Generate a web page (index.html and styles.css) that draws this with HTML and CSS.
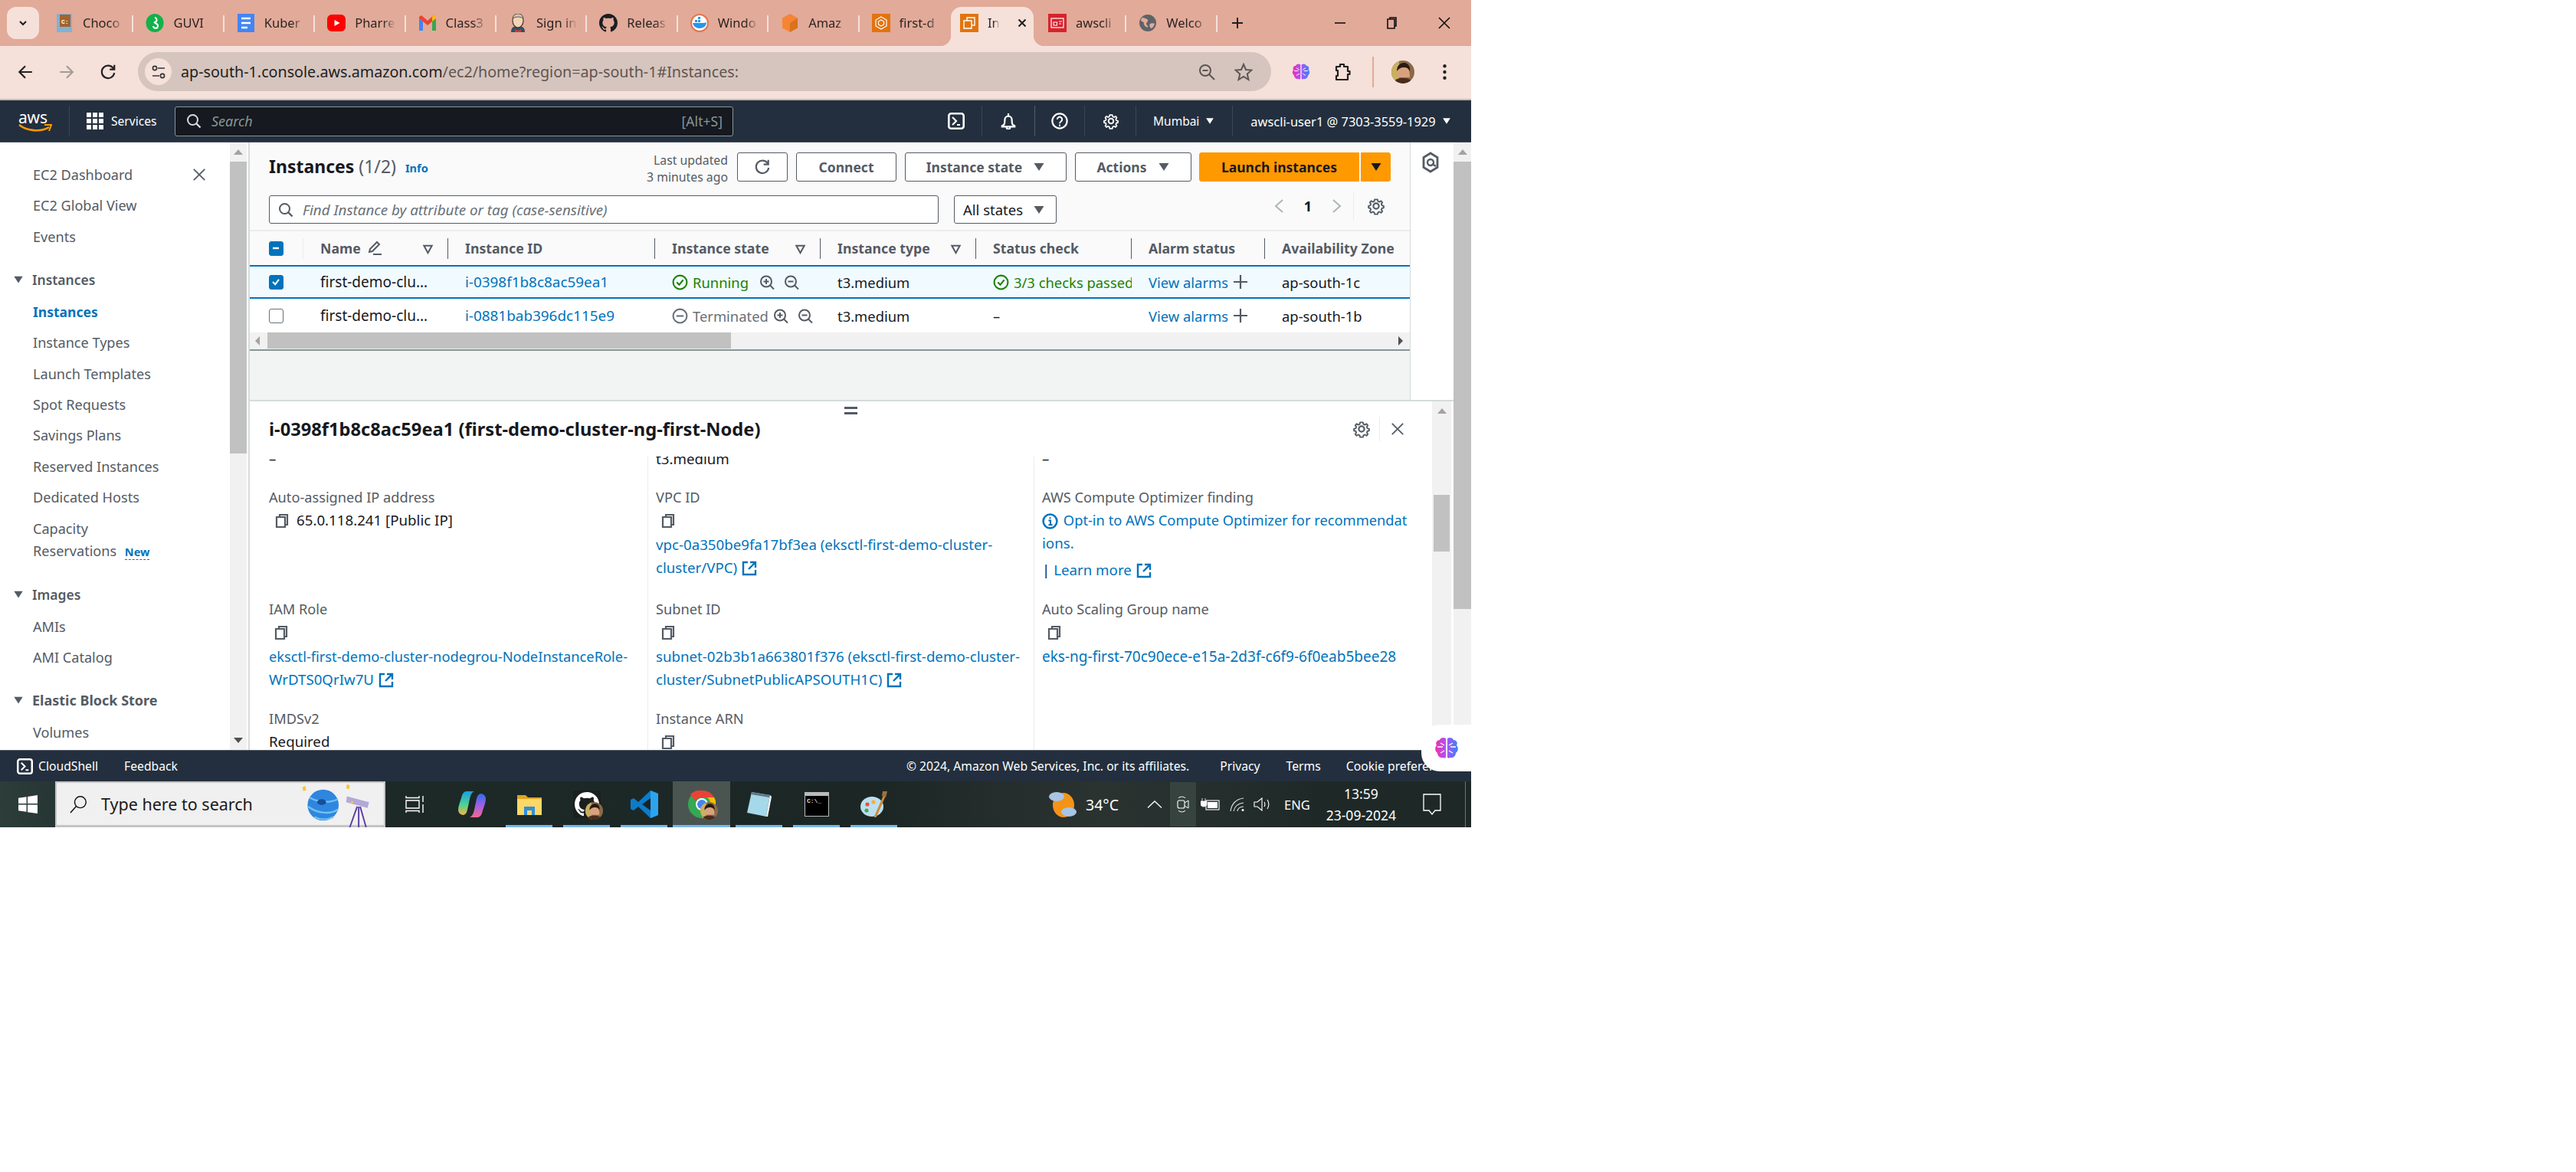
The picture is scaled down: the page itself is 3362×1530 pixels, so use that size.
FILE: index.html
```html
<!DOCTYPE html>
<html lang="en">
<head>
<meta charset="utf-8">
<title>Instances | EC2</title>
<link rel="stylesheet" href="styles.css">
</head>
<body>
<svg class="defs" width="0" height="0">
  <symbol id="i-copy" viewBox="0 0 20 20"><path d="M7 5V2h10v13h-3M3 5h11v13H3z" fill="none" stroke="currentColor" stroke-width="2.2"/></symbol>
  <symbol id="i-ext" viewBox="0 0 20 20"><path d="M8 2H2v16h16v-6M11 2h7v7M18 2L9 11" fill="none" stroke="currentColor" stroke-width="2.4"/></symbol>
  <symbol id="i-zin" viewBox="0 0 20 20"><circle cx="9" cy="9" r="7" fill="none" stroke="currentColor" stroke-width="2"/><path d="M14 14l5 5M5.5 9h7M9 5.5v7" fill="none" stroke="currentColor" stroke-width="2"/></symbol>
  <symbol id="i-zout" viewBox="0 0 20 20"><circle cx="9" cy="9" r="7" fill="none" stroke="currentColor" stroke-width="2"/><path d="M14 14l5 5M5.5 9h7" fill="none" stroke="currentColor" stroke-width="2"/></symbol>
  <symbol id="i-plus" viewBox="0 0 20 20"><path d="M10 1v18M1 10h18" stroke="currentColor" stroke-width="2.2" fill="none"/></symbol>
  <symbol id="i-gear" viewBox="0 0 24 24"><path d="M12 2l2.2 0 .7 2.8 2.1.9 2.5-1.500 2 2.300-1.500 2.400.8 2.100 2.700.8v2.800l-2.700.8-.8 2.100 1.500 2.400-2 2.300-2.500-1.500-2.100.9-.7 2.800h-4.400l-.7-2.800-2.100-.9-2.500 1.500-2-2.300 1.500-2.400-.8-2.100-2.700-.8v-2.800l2.700-.8.8-2.100-1.500-2.400 2-2.300 2.500 1.500 2.100-.9.7-2.800z" transform="translate(12 12) scale(.86) translate(-12 -12)" fill="none" stroke="currentColor" stroke-width="2.200" stroke-linejoin="round"/><circle cx="12" cy="12" r="3.600" fill="none" stroke="currentColor" stroke-width="2.200"/></symbol>
  <symbol id="i-shell" viewBox="0 0 22 22"><rect x="1.300" y="1.300" width="19.400" height="19.400" rx="3" fill="none" stroke="currentColor" stroke-width="2.600"/><path d="M6 6l5 5-5 5M12 16h4" fill="none" stroke="currentColor" stroke-width="2.200"/></symbol>
  <symbol id="i-search" viewBox="0 0 20 20"><circle cx="8.500" cy="8.500" r="6.500" fill="none" stroke="currentColor" stroke-width="2"/><path d="M13 13l5.500 5.500" stroke="currentColor" stroke-width="2.400"/></symbol>
  <symbol id="i-close" viewBox="0 0 20 20"><path d="M2 2l16 16M18 2L2 18" stroke="currentColor" stroke-width="2" fill="none"/></symbol>
  <symbol id="i-brain" viewBox="0 0 32 32"><defs><linearGradient id="g-brain" x1="0" x2="1"><stop offset="0" stop-color="#f22fb0"/><stop offset=".5" stop-color="#a855f7"/><stop offset="1" stop-color="#3b82f6"/></linearGradient></defs><path d="M15 3c-3-2-7-1-8 2-4 0-6 4-4 7-3 3-2 8 1 10 0 4 4 7 7 6 2 1 4 1 4-1zM17 3c3-2 7-1 8 2 4 0 6 4 4 7 3 3 2 8-1 10 0 4-4 7-7 6-2 1-4 1-4-1z" fill="url(#g-brain)"/><path d="M4 14h7M8 9l5 3M8 22l5-3M28 14h-7M24 9l-5 3M24 22l-5-3" stroke="#fff" stroke-width="1.300" fill="none"/></symbol>
  <symbol id="i-face" viewBox="0 0 30 30"><clipPath id="c-face"><circle cx="15" cy="15" r="15"/></clipPath><g clip-path="url(#c-face)"><rect width="30" height="30" fill="#8a6a45"/><rect x="0" y="0" width="10" height="30" fill="#c9b060"/><path d="M8 22c0-9 2-15 8-15s8 6 8 15z" fill="#d9a27e"/><path d="M7 14C7 5 13 3 17 3s8 4 7 11c-2-4-4-5-8-5s-7 2-9 5z" fill="#2a1a12"/><path d="M2 32c0-7 6-9 13-9s13 2 13 9z" fill="#4a2c1c"/></g></symbol>
  <symbol id="i-sort" viewBox="0 0 16 16"><path d="M2.500 3h11L8 13z" fill="none" stroke="currentColor" stroke-width="2.200"/></symbol>
  <symbol id="i-caret" viewBox="0 0 16 16"><path d="M1.500 3h13L8 13z" fill="currentColor"/></symbol>
</svg>

<div class="screen">
  <header class="tabbar">
    <div class="tab-search"><svg width="14" height="14" viewBox="0 0 14 14"><path d="M3 5l4 4 4-4" fill="none" stroke="#1c1b1f" stroke-width="2"/></svg></div>
    <div class="tab"><svg class="fav" viewBox="0 0 24 24"><rect x="2" width="20" height="24" fill="#7fb2d8"/><rect x="6" y="1" width="14" height="16" fill="#a5632c"/><text x="8" y="13" class="fav-text">C:</text></svg><span class="tab-label">Choco</span></div>
    <div class="tab"><svg class="fav" viewBox="0 0 24 24"><ellipse cx="12" cy="12" rx="11.500" ry="12" fill="#12b14b"/><path d="M12 5a3 3 0 1 1-1 6l3 2a3 3 0 1 1-4 3" fill="none" stroke="#fff" stroke-width="2"/></svg><span class="tab-label">GUVI</span></div>
    <div class="tab"><svg class="fav" viewBox="0 0 24 24"><rect x="1" width="22" height="28" rx="2" y="-2" fill="#4285f4"/><path d="M6 6h12M6 12h12M6 18h8" stroke="#fff" stroke-width="2.600"/></svg><span class="tab-label">Kuber</span></div>
    <div class="tab"><svg class="fav" viewBox="0 0 24 24"><rect y="1" width="24" height="22" rx="6" fill="#f00"/><path d="M9.500 8l7 4-7 4z" fill="#fff"/></svg><span class="tab-label">Pharre</span></div>
    <div class="tab"><svg class="fav" viewBox="0 0 24 24"><path d="M1 22V6l5 4v12z" fill="#4285f4"/><path d="M23 22V6l-5 4v12z" fill="#34a853"/><path d="M1 6l11 9 11-9v-2l-3-2-8 7-8-7-3 2z" fill="#ea4335"/><path d="M18 10l5-4V3l-3-1-2 2z" fill="#fbbc04"/></svg><span class="tab-label">Class3</span></div>
    <div class="tab"><svg class="fav" viewBox="0 0 24 24"><path d="M3 24c0-6 3-8 9-8s9 2 9 8z" fill="#335061"/><ellipse cx="12" cy="9" rx="7" ry="9" fill="#f0d6b7" stroke="#49332a" stroke-width="1.200"/><path d="M5 6c1-5 4-6 7-6s6 1 7 6c-3-2-9-3-14 0z" fill="#d1c4b4" stroke="#49332a" stroke-width=".8"/><path d="M8 20l4 2 4-2v4H8z" fill="#d33833"/></svg><span class="tab-label">Sign in</span></div>
    <div class="tab"><svg class="fav" viewBox="0 0 16 16"><path fill="#1b1f23" d="M8 0C3.580 0 0 3.580 0 8c0 3.540 2.290 6.530 5.470 7.590.4.070.55-.17.55-.38 0-.19-.01-.82-.01-1.490-2.010.37-2.530-.49-2.690-.94-.09-.23-.48-.94-.82-1.130-.28-.15-.68-.52-.01-.53.63-.01 1.080.58 1.230.82.72 1.210 1.870.87 2.330.66.070-.52.28-.87.51-1.070-1.780-.2-3.640-.89-3.640-3.950 0-.87.31-1.590.82-2.150-.08-.2-.36-1.020.08-2.120 0 0 .67-.21 2.200.82.64-.18 1.320-.27 2-.27.68 0 1.360.09 2 .27 1.530-1.040 2.200-.82 2.200-.82.44 1.100.16 1.920.08 2.120.51.56.82 1.270.82 2.150 0 3.070-1.870 3.750-3.650 3.950.29.25.54.73.54 1.480 0 1.070-.01 1.930-.01 2.200 0 .21.15.46.55.38A8.013 8.013 0 0016 8c0-4.420-3.580-8-8-8z"/></svg><span class="tab-label">Releas</span></div>
    <div class="tab"><svg class="fav" viewBox="0 0 24 24"><circle cx="12" cy="12" r="11" fill="#fff" stroke="#e8734a" stroke-width="2"/><path d="M3 12h15c1 0 3-1 3-1 0 5-4 8-9 8s-8-3-9-7z" fill="#2496ed"/><path d="M6 8h3v3H6zM10 8h3v3h-3zM10 4h3v3h-3z" fill="#2496ed"/></svg><span class="tab-label">Windo</span></div>
    <div class="tab"><svg class="fav" viewBox="0 0 24 24"><path d="M12 0l10 5.500v13L12 24 2 18.500v-13z" fill="#f58534"/><path d="M12 12l10-6.500v13L12 24z" fill="#d9731c"/></svg><span class="tab-label">Amaz</span></div>
    <div class="tab no-sep"><svg class="fav" viewBox="0 0 24 24"><rect width="24" height="24" fill="#e2740f"/><path d="M12 4l7 4v8l-7 4-7-4V8z M12 8l3.500 2v4L12 16l-3.500-2v-4z" fill="none" stroke="#fff" stroke-width="1.200"/></svg><span class="tab-label">first-d</span></div>
    <div class="tab-active"><svg class="fav" viewBox="0 0 24 24"><rect width="24" height="24" fill="#e2740f"/><path d="M9 9V5h10v10h-4M5 9h10v10H5z" fill="none" stroke="#fff" stroke-width="1.400"/></svg><span class="tab-label short">In</span><svg class="tab-x" viewBox="0 0 12 12"><path d="M1.500 1.500l9 9M10.500 1.500l-9 9" stroke="#1f1f1f" stroke-width="2"/></svg></div>
    <div class="tab"><svg class="fav" viewBox="0 0 24 24"><rect width="24" height="24" fill="#d6242d"/><rect x="4" y="6" width="16" height="12" fill="none" stroke="#fff" stroke-width="1.200"/><rect x="7" y="11" width="4.500" height="4" fill="none" stroke="#fff"/><path d="M14 10h4M14 13h3" stroke="#fff"/></svg><span class="tab-label">awscli</span></div>
    <div class="tab"><svg class="fav" viewBox="0 0 24 24"><circle cx="12" cy="12" r="11" fill="#5f6368"/><path d="M5 5c3 1 6 1 7 3s-2 3-2 5 3 2 2 5c-3-1-5-3-5-5 0-3-3-3-4-4 0-2 1-3 2-4zM15 13c2-1 4-1 6 0-1 3-3 6-5 6-2-2-2-5-1-6z" fill="#e2aa99"/></svg><span class="tab-label">Welco</span></div>
    <svg class="tab-plus" viewBox="0 0 16 16"><path d="M8 1v14M1 8h14" stroke="#1f1f1f" stroke-width="2"/></svg>
    <div class="win-controls">
      <svg viewBox="0 0 16 16"><path d="M1 8h14" stroke="#111" stroke-width="1.600"/></svg>
      <svg viewBox="0 0 16 16"><path d="M5 3V1h8v11h-2M2 3h9v12H2z" fill="none" stroke="#111" stroke-width="1.600"/></svg>
      <svg viewBox="0 0 16 16"><path d="M1 1l14 14M15 1L1 15" stroke="#111" stroke-width="1.600"/></svg>
    </div>
  </header>

  <div class="toolbar">
    <svg class="tb-icon" viewBox="0 0 20 20"><path d="M18 10H3M10 3l-7 7 7 7" fill="none" stroke="#222" stroke-width="2"/></svg>
    <svg class="tb-icon" viewBox="0 0 20 20"><path d="M2 10h15M10 3l7 7-7 7" fill="none" stroke="#a39a96" stroke-width="2"/></svg>
    <svg class="tb-icon" viewBox="0 0 20 20"><path d="M16.500 6A7.500 7.500 0 1 0 17.500 11" fill="none" stroke="#222" stroke-width="2"/><path d="M17.500 1.500V7H12" fill="none" stroke="#222" stroke-width="2"/></svg>
    <div class="omnibox">
      <div class="site-info"><svg width="20" height="20" viewBox="0 0 20 20"><circle cx="5" cy="5" r="2.600" fill="none" stroke="#333" stroke-width="1.600"/><path d="M9 5h9M2 15h9" stroke="#333" stroke-width="1.600"/><circle cx="15" cy="15" r="2.600" fill="none" stroke="#333" stroke-width="1.600"/></svg></div>
      <div class="url"><span class="url-host">ap-south-1.console.aws.amazon.com</span>/ec2/home?region=ap-south-1#Instances:</div>
      <svg class="omni-zoom" viewBox="0 0 22 22"><circle cx="9" cy="9" r="7" fill="none" stroke="#5b5755" stroke-width="2"/><path d="M5.500 9h7M14 14l7 7" stroke="#5b5755" stroke-width="2"/></svg>
      <svg class="omni-star" viewBox="0 0 24 24"><path d="M12 2l3 7 7.500.6-5.700 5 1.700 7.400L12 18l-6.500 4 1.700-7.400-5.700-5L9 9z" fill="none" stroke="#5b5755" stroke-width="2"/></svg>
    </div>
    <svg class="ext-brain"><use href="#i-brain"/></svg>
    <svg class="ext-puzzle" viewBox="0 0 24 24"><path d="M4 5h5V2h5v3h5v6h2.500v4H19v7H4v-5h2v-7H4z" fill="none" stroke="#1f1f1f" stroke-width="2.200" stroke-linejoin="round"/></svg>
    <span class="tb-sep"></span>
    <svg class="tb-avatar"><use href="#i-face"/></svg>
    <svg class="tb-menu" viewBox="0 0 4 20"><circle cx="2" cy="3" r="2" fill="#222"/><circle cx="2" cy="10" r="2" fill="#222"/><circle cx="2" cy="17" r="2" fill="#222"/></svg>
  </div>

  <nav class="awsnav">
    <div class="aws-logo"><span class="aws-word">aws</span><svg class="aws-smile" viewBox="0 0 44 12"><path d="M1 2c10 8 28 10 39 3" fill="none" stroke="#f90" stroke-width="2.600"/><path d="M34 2l9 0-3 8" fill="none" stroke="#f90" stroke-width="2"/></svg></div>
    <span class="nav-sep logo-sep"></span>
    <svg class="grid-icon" viewBox="0 0 22 22"><g fill="#fff"><rect width="6" height="6"/><rect x="8" width="6" height="6"/><rect x="16" width="6" height="6"/><rect y="8" width="6" height="6"/><rect x="8" y="8" width="6" height="6"/><rect x="16" y="8" width="6" height="6"/><rect y="16" width="6" height="6"/><rect x="8" y="16" width="6" height="6"/><rect x="16" y="16" width="6" height="6"/></g></svg>
    <span class="nav-services">Services</span>
    <div class="nav-search">
      <svg class="nav-search-icon"><use href="#i-search"/></svg>
      <span class="nav-search-ph">Search</span>
      <span class="nav-search-key">[Alt+S]</span>
    </div>
    <svg class="nav-icon shell"><use href="#i-shell"/></svg>
    <span class="nav-sep"></span>
    <svg class="nav-icon bell" viewBox="0 0 24 24"><path d="M12 1v3M6 17c1-2 1-4 1-7a5 5 0 0 1 10 0c0 3 0 5 1 7l3 2v1H3v-1zM9.500 21a2.500 2.500 0 0 0 5 0" fill="none" stroke="#fff" stroke-width="2.400"/></svg>
    <span class="nav-sep strong"></span>
    <svg class="nav-icon help" viewBox="0 0 24 24"><circle cx="12" cy="12" r="10.500" fill="none" stroke="#fff" stroke-width="2.400"/><path d="M8.500 9.500a3.500 3.500 0 1 1 5.500 3c-1.300.9-2 1.500-2 3M12 17v2.500" fill="none" stroke="#fff" stroke-width="2.200"/></svg>
    <span class="nav-sep"></span>
    <svg class="nav-icon gear"><use href="#i-gear"/></svg>
    <span class="nav-sep"></span>
    <span class="nav-region">Mumbai</span><svg class="nav-caret"><use href="#i-caret"/></svg>
    <span class="nav-sep"></span>
    <span class="nav-user">awscli-user1 @ 7303-3559-1929</span><svg class="nav-caret"><use href="#i-caret"/></svg>
  </nav>

  <div class="console">
    <aside class="sidenav">
      <div class="side-head"><span class="side-link">EC2 Dashboard</span><svg class="side-close"><use href="#i-close"/></svg></div>
      <div class="side-link item">EC2 Global View</div>
      <div class="side-link item">Events</div>
      <div class="side-section"><svg class="side-caret"><use href="#i-caret"/></svg>Instances</div>
      <div class="side-link item active">Instances</div>
      <div class="side-link item">Instance Types</div>
      <div class="side-link item">Launch Templates</div>
      <div class="side-link item">Spot Requests</div>
      <div class="side-link item">Savings Plans</div>
      <div class="side-link item">Reserved Instances</div>
      <div class="side-link item">Dedicated Hosts</div>
      <div class="side-link item wrap">Capacity<br>Reservations <span class="side-new">New</span></div>
      <div class="side-section"><svg class="side-caret"><use href="#i-caret"/></svg>Images</div>
      <div class="side-link item">AMIs</div>
      <div class="side-link item">AMI Catalog</div>
      <div class="side-section bold"><svg class="side-caret"><use href="#i-caret"/></svg>Elastic Block Store</div>
      <div class="side-link item">Volumes</div>
    </aside>
    <div class="scrollbar side-scroll"><span class="sb-arrow up"></span><span class="sb-thumb"></span><span class="sb-arrow down"></span></div>

    <main class="workspace">
      <div class="upper">
        <section class="instances">
          <div class="inst-head">
            <h1 class="inst-title">Instances <span class="inst-count">(1/2)</span></h1>
            <span class="info">Info</span>
            <div class="last-updated">Last updated<br>3 minutes ago</div>
            <button class="btn icon-btn"><svg viewBox="0 0 20 20" width="22" height="22"><path d="M16.500 6A7.500 7.500 0 1 0 17.500 11" fill="none" stroke="#545b64" stroke-width="2"/><path d="M17 1.500V7H11.500" fill="none" stroke="#545b64" stroke-width="2"/></svg></button>
            <button class="btn connect">Connect</button>
            <button class="btn state">Instance state<svg class="btn-caret"><use href="#i-caret"/></svg></button>
            <button class="btn actions">Actions<svg class="btn-caret"><use href="#i-caret"/></svg></button>
            <button class="btn primary launch">Launch instances</button>
            <button class="btn primary launch-more"><svg class="btn-caret"><use href="#i-caret"/></svg></button>
          </div>
          <div class="inst-filter">
            <div class="filter-input"><svg class="filter-icon"><use href="#i-search"/></svg><span>Find Instance by attribute or tag (case-sensitive)</span></div>
            <div class="filter-select">All states<svg class="btn-caret"><use href="#i-caret"/></svg></div>
            <div class="pager">
              <svg class="pg-arrow" viewBox="0 0 14 20"><path d="M12 2L3 10l9 8" fill="none" stroke="#aab7b8" stroke-width="2"/></svg>
              <span class="pg-num">1</span>
              <svg class="pg-arrow" viewBox="0 0 14 20"><path d="M2 2l9 8-9 8" fill="none" stroke="#aab7b8" stroke-width="2"/></svg>
              <span class="pg-sep"></span>
              <svg class="pg-gear"><use href="#i-gear"/></svg>
            </div>
          </div>
          <div class="table">
            <div class="row thead">
              <div class="cell c-check"><span class="check on"><svg viewBox="0 0 20 20"><path d="M5 10h10" stroke="#fff" stroke-width="3"/></svg></span></div>
              <div class="cell c-name">Name<svg class="pencil" viewBox="0 0 20 20"><path d="M3 15l1-4L13 2l3 3-9 9zM8 18h11" fill="none" stroke="#545b64" stroke-width="2"/></svg><svg class="sort"><use href="#i-sort"/></svg></div>
              <div class="cell c-id">Instance ID</div>
              <div class="cell c-state">Instance state<svg class="sort"><use href="#i-sort"/></svg></div>
              <div class="cell c-type">Instance type<svg class="sort"><use href="#i-sort"/></svg></div>
              <div class="cell c-check2">Status check</div>
              <div class="cell c-alarm">Alarm status</div>
              <div class="cell c-az">Availability Zone</div>
            </div>
            <div class="row selected">
              <div class="cell c-check"><span class="check on"><svg viewBox="0 0 20 20"><path d="M5 10l4 4 6-8" fill="none" stroke="#fff" stroke-width="2.600"/></svg></span></div>
              <div class="cell c-name name-val">first-demo-clu…</div>
              <div class="cell c-id"><span class="link id-val">i-0398f1b8c8ac59ea1</span></div>
              <div class="cell c-state"><svg class="status-ic ok" viewBox="0 0 20 20"><circle cx="10" cy="10" r="8.500" fill="none" stroke="currentColor" stroke-width="2"/><path d="M6 10l3 3 5-6" fill="none" stroke="currentColor" stroke-width="2"/></svg><span class="ok">Running</span><svg class="zoom-ic first"><use href="#i-zin"/></svg><svg class="zoom-ic"><use href="#i-zout"/></svg></div>
              <div class="cell c-type">t3.medium</div>
              <div class="cell c-check2 clip"><svg class="status-ic ok" viewBox="0 0 20 20"><circle cx="10" cy="10" r="8.500" fill="none" stroke="currentColor" stroke-width="2"/><path d="M6 10l3 3 5-6" fill="none" stroke="currentColor" stroke-width="2"/></svg><span class="ok">3/3 checks passed</span></div>
              <div class="cell c-alarm"><span class="link">View alarms</span><svg class="plus-ic"><use href="#i-plus"/></svg></div>
              <div class="cell c-az">ap-south-1c</div>
            </div>
            <div class="row">
              <div class="cell c-check"><span class="check"></span></div>
              <div class="cell c-name name-val">first-demo-clu…</div>
              <div class="cell c-id"><span class="link id-val">i-0881bab396dc115e9</span></div>
              <div class="cell c-state"><svg class="status-ic muted" viewBox="0 0 20 20"><circle cx="10" cy="10" r="8.500" fill="none" stroke="currentColor" stroke-width="2"/><path d="M5.500 10h9" stroke="currentColor" stroke-width="2"/></svg><span class="muted">Terminated</span><svg class="zoom-ic near"><use href="#i-zin"/></svg><svg class="zoom-ic"><use href="#i-zout"/></svg></div>
              <div class="cell c-type">t3.medium</div>
              <div class="cell c-check2">–</div>
              <div class="cell c-alarm"><span class="link">View alarms</span><svg class="plus-ic"><use href="#i-plus"/></svg></div>
              <div class="cell c-az">ap-south-1b</div>
            </div>
          </div>
          <div class="hscroll"><span class="hs-left"></span><span class="hs-thumb"></span><span class="hs-right"></span></div>
          <div class="gap-fill"></div>
        </section>
        <div class="help-rail"><svg width="24" height="28" viewBox="0 0 24 28"><path d="M12 2l9 5.500v13L12 26l-9-5.500v-13z" fill="none" stroke="#545b64" stroke-width="2.800"/><circle cx="12" cy="14" r="4" fill="none" stroke="#545b64" stroke-width="2.400"/><path d="M14 16l5 3" stroke="#545b64" stroke-width="2.400"/></svg></div>
      </div>

      <section class="details">
        <div class="details-main">
          <div class="drag-handle"></div>
          <div class="details-head">
            <h2 class="details-title">i-0398f1b8c8ac59ea1 (first-demo-cluster-ng-first-Node)</h2>
            <svg class="dh-gear"><use href="#i-gear"/></svg>
            <span class="dh-sep"></span>
            <svg class="dh-close"><use href="#i-close"/></svg>
          </div>
          <div class="details-clip">
            <div class="grid">
              <div class="col">
                <div class="kv kv-top"><div class="val">–</div></div>
                <div class="kv kv-a"><div class="key">Auto-assigned IP address</div><div class="val"><svg class="copy inline"><use href="#i-copy"/></svg>65.0.118.241 [Public IP]</div></div>
                <div class="kv kv-b"><div class="key">IAM Role</div><div class="val"><svg class="copy"><use href="#i-copy"/></svg></div><div class="val link"><span class="narrow">eksctl-first-demo-cluster-nodegrou-NodeInstanceRole-</span><br>WrDTS0QrIw7U<svg class="ext"><use href="#i-ext"/></svg></div></div>
                <div class="kv"><div class="key">IMDSv2</div><div class="val">Required</div></div>
              </div>
              <div class="col">
                <div class="kv kv-top"><div class="val">t3.medium</div></div>
                <div class="kv kv-a"><div class="key">VPC ID</div><div class="val"><svg class="copy"><use href="#i-copy"/></svg></div><div class="val link">vpc-0a350be9fa17bf3ea (eksctl-first-demo-cluster-<br>cluster/VPC)<svg class="ext"><use href="#i-ext"/></svg></div></div>
                <div class="kv kv-b"><div class="key">Subnet ID</div><div class="val"><svg class="copy"><use href="#i-copy"/></svg></div><div class="val link">subnet-02b3b1a663801f376 (eksctl-first-demo-cluster-<br>cluster/SubnetPublicAPSOUTH1C)<svg class="ext"><use href="#i-ext"/></svg></div></div>
                <div class="kv"><div class="key">Instance ARN</div><div class="val"><svg class="copy"><use href="#i-copy"/></svg></div></div>
              </div>
              <div class="col">
                <div class="kv kv-top"><div class="val">–</div></div>
                <div class="kv kv-a"><div class="key">AWS Compute Optimizer finding</div><div class="val opt link"><svg class="info-ic" viewBox="0 0 20 20"><circle cx="10" cy="10" r="8.500" fill="none" stroke="currentColor" stroke-width="2.400"/><path d="M10 5v2M8 9h2.500v5M8 14.500h5" fill="none" stroke="currentColor" stroke-width="2"/></svg> <span class="narrow">Opt-in to AWS Compute Optimizer for recommendat</span><br>ions.</div><div class="val learn"><span class="pipe">|</span> <span class="link">Learn more<svg class="ext"><use href="#i-ext"/></svg></span></div></div>
                <div class="kv kv-b"><div class="key">Auto Scaling Group name</div><div class="val"><svg class="copy"><use href="#i-copy"/></svg></div><div class="val link eks-val">eks-ng-first-70c90ece-e15a-2d3f-c6f9-6f0eab5bee28</div></div>
              </div>
            </div>
          </div>
        </div>
        <div class="scrollbar inner-scroll"><span class="sb-arrow up"></span><span class="sb-thumb"></span></div>
      </section>
      <div class="brain-bubble"><svg width="32" height="32"><use href="#i-brain"/></svg></div>
    </main>
    <div class="scrollbar page-scroll"><span class="sb-arrow up"></span><span class="sb-thumb"></span></div>
  </div>

  <footer class="awsfoot">
    <svg class="foot-shell"><use href="#i-shell"/></svg>
    <span class="foot-link shell-label">CloudShell</span>
    <span class="foot-link feedback">Feedback</span>
    <span class="foot-link copyright">© 2024, Amazon Web Services, Inc. or its affiliates.</span>
    <span class="foot-link privacy">Privacy</span>
    <span class="foot-link terms">Terms</span>
    <span class="foot-link cookie">Cookie preferences</span>
  </footer>

  <div class="taskbar">
    <div class="start"><svg width="25" height="24" viewBox="0 0 26 26" preserveAspectRatio="none"><path d="M0 4l11-1.500V12H0zM12.500 2.300L26 0v12H12.500zM0 13.500h11v10L0 22zM12.500 13.500H26V26l-13.500-2z" fill="#fff"/></svg></div>
    <div class="win-search">
      <svg class="ws-glass" viewBox="0 0 26 26"><circle cx="15" cy="10" r="8" fill="none" stroke="#111" stroke-width="1.600"/><path d="M9 16L1 25" stroke="#111" stroke-width="1.600"/></svg>
      <span class="ws-text">Type here to search</span>
      <svg class="ws-art" viewBox="0 0 100 60"><circle cx="28" cy="30" r="21" fill="#2e86de"/><path d="M10 20c10 6 26 8 38 2M8 32c10 8 28 12 40 4M16 46c8 4 18 4 26 0" stroke="#6ec1f5" stroke-width="2.500" fill="none"/><ellipse cx="26" cy="26" rx="6" ry="4" fill="#154f99"/><path d="M60 18l30 8-2 8-29-8z" fill="#b3a9d8"/><path d="M74 32l-10 28M76 32v28M78 32l8 28" stroke="#5b3fa0" stroke-width="2" fill="none"/><path d="M0 6l4-2 1 6-4 1zM60 2l4 1-1 6-4-2zM66 24l3 1-2 4-2-2z" fill="#f5c542"/></svg>
    </div>
    <div class="tk-slot"><svg class="ic-24" viewBox="0 0 24 24"><path d="M1 1v2.500h17V1M1 7h17v10H1zM1 23v-2.500h17V23M23 1v8M23 12v11" fill="none" stroke="#fff" stroke-width="1.400"/></svg></div>
    <div class="tk-slot"><svg class="ic-copilot" viewBox="0 0 36 34"><defs><linearGradient id="g-cop1" x1="0" y1="0" x2="0" y2="1"><stop offset="0" stop-color="#1b9de2"/><stop offset=".55" stop-color="#4ad295"/><stop offset="1" stop-color="#f4b63f"/></linearGradient><linearGradient id="g-cop2" x1="0" y1="0" x2="0" y2="1"><stop offset="0" stop-color="#2a6fe8"/><stop offset=".5" stop-color="#a45ee5"/><stop offset="1" stop-color="#ef6a8f"/></linearGradient></defs><path d="M11 0h10c-4 2-5 6-6 10l-3 14c-1 4-2 6-5 7-4 0-7-3-7-7 0-4 2-9 4-15 1-5 3-9 7-9z" fill="url(#g-cop1)"/><path d="M25 34H15c4-2 5-6 6-10l3-14c1-4 2-6 5-7 4 0 7 3 7 7 0 4-2 9-4 15-1 5-3 9-7 9z" fill="url(#g-cop2)"/></svg></div>
    <div class="tk-slot run"><svg class="ic-folder" viewBox="0 0 32 28"><path d="M0 2h11l3 3h18v23H0z" fill="#e0a420"/><path d="M0 7h32v21H0z" fill="#fcd867"/><path d="M9 28V17h14v11h-4v-6h-6v6z" fill="#2d8fdc"/></svg></div>
    <div class="tk-slot run">
      <svg class="ic-36" viewBox="0 0 36 36"><rect width="36" height="36" fill="#1b1f1e"/><g transform="translate(2 2) scale(2)"><path fill="#fff" d="M8 0C3.580 0 0 3.580 0 8c0 3.540 2.290 6.530 5.470 7.590.4.070.55-.17.55-.38 0-.19-.01-.82-.01-1.490-2.010.37-2.530-.49-2.690-.94-.09-.23-.48-.94-.82-1.130-.28-.15-.68-.52-.01-.53.63-.01 1.080.58 1.230.82.72 1.210 1.870.87 2.330.66.070-.52.28-.87.51-1.070-1.780-.2-3.640-.89-3.640-3.950 0-.87.31-1.590.82-2.150-.08-.2-.36-1.020.08-2.120 0 0 .67-.21 2.200.82.64-.18 1.320-.27 2-.27.68 0 1.360.09 2 .27 1.530-1.040 2.200-.82 2.200-.82.44 1.100.16 1.920.08 2.120.51.56.82 1.270.82 2.150 0 3.070-1.870 3.750-3.650 3.950.29.25.54.73.54 1.480 0 1.070-.01 1.930-.01 2.200 0 .21.15.46.55.38A8.013 8.013 0 0016 8c0-4.420-3.580-8-8-8z"/></g></svg>
      <svg class="tk-badge"><use href="#i-face"/></svg>
    </div>
    <div class="tk-slot run"><svg class="ic-36" viewBox="0 0 36 36"><path d="M26 0l10 4v28l-10 4L10 21l-6 5-4-2V12l4-2 6 5z" fill="#0b7ccb"/><path d="M26 10L15 18l11 8z" fill="#1b2422"/><path d="M26 0l10 4v28l-10 4z" fill="#2ba4f0"/></svg></div>
    <div class="tk-slot active">
      <svg class="ic-36" viewBox="0 0 36 36"><circle cx="18" cy="18" r="18" fill="#34a853"/><path d="M18 0a18 18 0 0 1 16 9H18a9 9 0 0 0-8 5L3 5A18 18 0 0 1 18 0z" fill="#ea4335"/><path d="M34 9a18 18 0 0 1-16 27l8-13a9 9 0 0 0-1-14z" fill="#fbbc04"/><circle cx="18" cy="18" r="7" fill="#4285f4" stroke="#fff" stroke-width="2"/></svg>
      <svg class="tk-badge"><use href="#i-face"/></svg>
    </div>
    <div class="tk-slot run"><svg class="ic-notepad" viewBox="0 0 32 32"><path d="M6 0l24 4-5 28L0 27z" fill="#a5d8e8"/><path d="M6 0l24 4-1 3L5 3z" fill="#5c7a8a"/><path d="M25 32l5-28 2 2-5 26z" fill="#fff"/></svg></div>
    <div class="tk-slot run"><svg class="ic-cmd" viewBox="0 0 32 32"><rect width="32" height="32" fill="#bbb"/><rect x="1" y="5" width="30" height="26" fill="#000"/><text x="3" y="14" class="cmd-text">C:\_</text></svg></div>
    <div class="tk-slot run"><svg class="ic-paint" viewBox="0 0 35 34"><ellipse cx="15" cy="20" rx="15" ry="13" fill="#bcdff0"/><circle cx="9" cy="17" r="2.600" fill="#e94f3d"/><circle cx="17" cy="14" r="2.600" fill="#f2b134"/><circle cx="8" cy="25" r="2.600" fill="#3faa5b"/><path d="M33 2L19 34" stroke="#c98a3a" stroke-width="3"/><path d="M29 0h6l-2 8-5-2z" fill="#a0703a"/></svg></div>
    <div class="weather"><svg class="wx" viewBox="0 0 36 34"><ellipse cx="19" cy="18" rx="14" ry="16" fill="#f39419"/><ellipse cx="10" cy="7" rx="10" ry="6" fill="#a9c4e4"/><ellipse cx="26" cy="27" rx="10" ry="6" fill="#a9c4e4"/></svg><span class="wx-temp">34°C</span></div>
    <svg class="tray chevron" viewBox="0 0 20 10"><path d="M1 9.500L10 1l9 8.500" fill="none" stroke="#fff" stroke-width="1.300"/></svg>
    <div class="tray-meet"><svg width="16" height="22" viewBox="0 0 16 22"><rect x="1" y="6" width="9" height="10" rx="2" fill="none" stroke="#fff" stroke-width="1.100"/><path d="M10 9l5-3v10l-5-3M2 3c2-2.500 7-2.500 9 0M2 19c2 2.500 7 2.500 9 0" fill="none" stroke="#fff" stroke-width="1"/></svg></div>
    <svg class="tray power" viewBox="0 0 25 16"><rect x="7" y="3" width="17" height="12" fill="none" stroke="#fff" stroke-width="1.100"/><rect x="9" y="5" width="13" height="8" fill="#fff"/><path d="M2 0v4M6 0v4M0 4h8v4c0 2-2 3-4 3s-4-1-4-3z" fill="#fff" stroke="#fff" stroke-width=".8"/></svg>
    <svg class="tray wifi" viewBox="0 0 20 18"><path d="M1 18C2 9 8 2 18 1M5 18c1-5 5-10 13-11M10 18c0-3 3-6 8-6" fill="none" stroke="#dfe3e3" stroke-width="1.100"/><circle cx="17" cy="16.500" r="1.500" fill="#fff"/></svg>
    <svg class="tray vol" viewBox="0 0 23 18"><path d="M1 6h4l6-5v16l-6-5H1zM14 6c1.200 2 1.200 4 0 6M18 3c2.500 4 2.500 8 0 12" fill="none" stroke="#fff" stroke-width="1.100"/></svg>
    <span class="tray-lang">ENG</span>
    <div class="clock"><span>13:59</span><span>23-09-2024</span></div>
    <svg class="notify" viewBox="0 0 24 28"><path d="M1 1h22v21h-7l-4 5-4-5H1z" fill="none" stroke="#fff" stroke-width="1.300"/></svg>
    <span class="show-desktop"></span>
  </div>
</div>
</body>
</html>
```
FILE: styles.css
```css
* { box-sizing: border-box; }
html, body { margin: 0; padding: 0; background: #fff; }
body { font-family: "Noto Sans", "Open Sans", sans-serif; color: #16191f; }
.defs { position: absolute; }
.screen { width: 1920px; height: 1080px; display: flex; flex-direction: column; overflow: hidden; }

/* browser tabs */
.tabbar { height: 60px; background: #e2aa99; display: flex; align-items: flex-start; flex: none; }
.tab-search { width: 42px; height: 42px; margin: 9px 5px 0 9px; border-radius: 12px; background: #f5e1da; display: flex; align-items: center; justify-content: center; }
.tab { width: 118.400px; height: 60px; padding: 18px 8px 0 16px; display: flex; gap: 12px; position: relative; flex: none; }
.tab::after { content: ""; position: absolute; right: 0; top: 20px; width: 2px; height: 22px; background: #f5e1da; }
.tab.no-sep::after { display: none; }
.fav { width: 24px; height: 24px; flex: none; }
.fav-text { font: 700 8px "Liberation Mono", monospace; fill: #fff; }
.tab-label { font-size: 16.500px; line-height: 24px; color: #2a2422; white-space: nowrap; flex: 1; min-width: 0; -webkit-mask-image: linear-gradient(90deg, #000 62%, transparent 92%); mask-image: linear-gradient(90deg, #000 62%, transparent 92%); }
.tab-active { width: 108px; height: 51px; margin: 9px 3px 0 1px; padding: 9px 8px 0 12px; background: #f5e1da; border-radius: 14px 14px 0 0; display: flex; gap: 12px; flex: none; position: relative; }
.tab-active::before, .tab-active::after { content: ""; position: absolute; bottom: 0; width: 14px; height: 14px; background: radial-gradient(circle at 0 0, transparent 14px, #f5e1da 14.500px); }
.tab-active::before { left: -14px; }
.tab-active::after { right: -14px; background: radial-gradient(circle at 100% 0, transparent 14px, #f5e1da 14.500px); }
.tab-label.short { flex: 0 0 16px; -webkit-mask-image: linear-gradient(90deg, #000 45%, transparent); mask-image: linear-gradient(90deg, #000 45%, transparent); }
.tab-x { width: 12px; height: 12px; margin: 6px 0 0 11px; flex: none; }
.tab-plus { width: 16px; height: 16px; margin: 22px 0 0 18px; flex: none; }
.win-controls { margin-left: auto; display: flex; gap: 52px; padding: 22px 27px 0 0; }
.win-controls svg { width: 16px; height: 16px; }

/* toolbar */
.toolbar { height: 71px; background: #f5e1da; border-bottom: 2px solid #c9bab4; display: flex; align-items: center; padding: 0 0 2px 22px; flex: none; }
.tb-icon { width: 22px; height: 22px; margin-right: 32px; flex: none; }
.omnibox { width: 1479px; height: 51px; margin-left: -4px; border-radius: 26px; background: #d6c5be; display: flex; align-items: center; padding-left: 9px; flex: none; }
.site-info { width: 35px; height: 35px; border-radius: 50%; background: #f5e1da; display: flex; align-items: center; justify-content: center; flex: none; }
.url { font-size: 19.700px; margin-left: 12px; color: #5f5552; white-space: nowrap; }
.url-host { color: #1f1f1f; }
.omni-zoom { width: 22px; height: 22px; margin-left: auto; }
.omni-star { width: 24px; height: 24px; margin: 0 24px 0 25px; }
.ext-brain { width: 24px; height: 24px; margin-left: 27px; flex: none; }
.ext-puzzle { width: 24px; height: 26px; margin-left: 30px; flex: none; }
.tb-sep { width: 2px; height: 40px; background: #e2aa99; margin-left: 27px; flex: none; }
.tb-avatar { width: 30px; height: 30px; margin-left: 23px; flex: none; }
.tb-menu { width: 5px; height: 22px; margin-left: 37px; flex: none; }

/* aws nav */
.awsnav { height: 55px; background: #232f3e; display: flex; align-items: center; color: #fff; padding-left: 24px; flex: none; border-bottom: 1px solid #4b5563; }
.aws-logo { width: 44px; height: 30px; position: relative; flex: none; }
.aws-word { display: block; font: 400 21px/20px "Noto Sans", sans-serif; letter-spacing: -.2px; }
.aws-smile { position: absolute; left: 0; top: 18px; width: 44px; height: 12px; }
.nav-sep { width: 1px; height: 40px; background: #3a4656; flex: none; }
.nav-sep.strong { background: #545b64; }
.logo-sep { margin: 0 22px; }
.grid-icon { width: 22px; height: 22px; flex: none; }
.nav-services { font-size: 15.600px; width: 62px; margin-left: 10px; flex: none; white-space: nowrap; }
.nav-search { width: 729px; height: 39px; margin: 0 0 0 21px; background: #16191f; border: 1px solid #879596; border-radius: 3px; display: flex; align-items: center; padding: 0 13px 0 14px; flex: none; }
.nav-search-icon { width: 20px; height: 20px; color: #d5dbdb; flex: none; }
.nav-search-ph { font-size: 18px; font-style: italic; color: #879596; margin-left: 13px; }
.nav-search-key { font-size: 17.600px; color: #879596; margin-left: auto; }
.nav-icon { flex: none; color: #fff; }
.nav-icon.shell { width: 22px; height: 22px; margin: 0 22px 0 280px; }
.nav-icon.bell { width: 22px; height: 22px; margin: 0 23px; }
.nav-icon.help { width: 22px; height: 22px; margin: 0 21px; }
.nav-icon.gear { width: 22px; height: 22px; margin: 0 21px 0 23px; }
.nav-region { font-size: 15.500px; margin-left: 22px; flex: none; }
.nav-user { font-size: 16.400px; margin-left: 23px; flex: none; }
.nav-caret { width: 12px; height: 12px; margin: 0 23px 0 8px; flex: none; color: #fff; }

/* console layout */
.console { flex: 1; min-height: 0; display: flex; background: #fff; }
.sidenav { width: 300px; flex: none; padding: 28px 0 0 43px; overflow: hidden; font-size: 18.100px; color: #545b64; }
.side-head { display: flex; align-items: center; height: 28px; justify-content: space-between; padding-right: 31px; margin-bottom: 12.400px; }
.side-close { width: 18px; height: 18px; color: #545b64; }
.item { height: 28px; line-height: 28px; margin-bottom: 12.400px; white-space: nowrap; }
.item.active { color: #0073bb; font-weight: 700; font-size: 17.500px; }
.item.wrap { height: 58px; line-height: 29px; margin-bottom: 26px; white-space: normal; }
.side-new { color: #0073bb; font-size: 14.500px; font-weight: 700; border-bottom: 1px dashed #0073bb; margin-left: 6px; }
.side-section { height: 28px; line-height: 28px; margin: 28px 0 14px -26px; color: #545b64; font-weight: 600; font-size: 17.500px; display: flex; align-items: center; gap: 11px; white-space: nowrap; }
.side-section.bold { font-weight: 700; font-size: 18px; }
.side-caret { width: 14px; height: 14px; color: #545b64; flex: none; }

.scrollbar { background: #f1f1f1; display: flex; flex-direction: column; align-items: center; flex: none; position: relative; }
.side-scroll { width: 22px; margin-right: 2px; }
.sb-thumb { display: block; width: 100%; background: #c1c1c1; }
.sb-arrow { display: block; width: 0; height: 0; border-left: 6px solid transparent; border-right: 6px solid transparent; flex: none; }
.sb-arrow.up { border-bottom: 7px solid #a3a3a3; margin: 9px 0 9px; }
.sb-arrow.down { border-top: 7px solid #505050; margin: auto 0 9px; }
.side-scroll .sb-thumb { height: 381px; }

.workspace { flex: none; width: 1573px; display: flex; flex-direction: column; position: relative; border-left: 2px solid #d5dbdb; }
.upper { height: 336px; display: flex; flex: none; }
.instances { width: 1515px; flex: none; background: #fafafa; border-right: 1px solid #d5dbdb; overflow: hidden; display: flex; flex-direction: column; }
.inst-head { height: 69px; display: flex; align-items: flex-start; padding: 13px 0 0 25px; flex: none; }
.inst-title { margin: 4px 0 0; font-size: 23px; line-height: 28px; font-weight: 700; white-space: nowrap; }
.inst-count { font-weight: 400; color: #545b64; }
.info { color: #0073bb; font-size: 14.500px; font-weight: 700; margin: 10px 0 0 12px; }
.last-updated { margin-left: auto; margin-top: -1px; text-align: right; font-size: 15.800px; line-height: 22px; color: #545b64; white-space: nowrap; }
.btn { height: 38px; border: 1px solid #545b64; border-radius: 3px; background: #fff; color: #545b64; font: 700 17.500px "Noto Sans", sans-serif; display: flex; align-items: center; justify-content: center; padding: 0; flex: none; white-space: nowrap; }
.icon-btn { width: 66px; margin-left: 12px; }
.connect { width: 131px; margin-left: 11px; }
.state { width: 211px; margin-left: 11px; }
.actions { width: 152px; margin-left: 11px; }
.btn-caret { width: 16px; height: 16px; margin-left: 14px; color: #545b64; flex: none; }
.primary { background: #f90; border-color: #f90; color: #16191f; }
.launch { width: 209px; margin-left: 10px; border-radius: 3px 0 0 3px; }
.launch-more { width: 39px; margin: 0 25px 0 2px; border-radius: 0 3px 3px 0; }
.launch-more .btn-caret { margin: 0; color: #16191f; }
.inst-filter { height: 47px; display: flex; align-items: flex-start; padding-left: 25px; flex: none; border-bottom: 2px solid #eaeded; }
.filter-input { width: 874px; height: 37px; background: #fff; border: 1px solid #545b64; border-radius: 3px; display: flex; align-items: center; padding-left: 11px; font-size: 18.800px; font-style: italic; color: #687078; flex: none; white-space: nowrap; }
.filter-icon { width: 20px; height: 22px; margin-right: 12px; color: #545b64; flex: none; }
.filter-select { width: 134px; height: 37px; margin-left: 20px; background: #fff; border: 1px solid #545b64; border-radius: 3px; display: flex; align-items: center; padding-left: 11px; font-size: 18.500px; color: #16191f; flex: none; white-space: nowrap; }
.filter-select .btn-caret { margin-left: 13px; }
.pager { display: flex; align-items: center; margin-left: auto; padding-right: 32px; height: 36px; margin-top: -4px; }
.pg-arrow { width: 14px; height: 20px; flex: none; }
.pg-num { font-size: 18px; font-weight: 700; width: 24px; text-align: center; margin: 0 19px; }
.pg-sep { width: 1px; height: 36px; background: #eaeded; margin: 0 17px 0 14px; }
.pg-gear { width: 24px; height: 24px; color: #545b64; }

.table { flex: none; }
.row { display: flex; height: 44px; background: #fff; font-size: 18.400px; align-items: center; white-space: nowrap; position: relative; }
.thead { height: 44px; background: #fafafa; font-weight: 700; font-size: 17.700px; color: #545b64; align-items: center; }
.row.selected { height: 44px; background: #f1faff; border-top: 2px solid #0073bb; border-bottom: 2px solid #0073bb; }
.cell { display: flex; align-items: center; padding-left: 22px; height: 27px; flex: none; overflow: hidden; position: relative; }
.thead .cell::after { content: ""; position: absolute; right: 0; top: 0; width: 1px; height: 100%; background: #545b64; }
.thead .cell.c-az::after { display: none; }
.thead .cell.c-check::after { background: #eaeded; }
.c-check { width: 70px; padding-left: 25px; }
.c-name { width: 189px; }
.name-val { font-size: 19px; }
.id-val { font-size: 18.900px; }
.c-id { width: 270px; }
.c-state { width: 216px; }
.c-type { width: 203px; }
.c-check2 { width: 203px; }
.c-alarm { width: 174px; }
.c-az { width: 200px; }
.sort { width: 15px; height: 15px; color: #545b64; position: absolute; right: 19px; top: 7px; }
.pencil { width: 20px; height: 20px; margin-left: 8px; }
.check { width: 19px; height: 19px; border: 1.500px solid #687078; border-radius: 3px; background: #fff; display: block; flex: none; }
.check.on { background: #0073bb; border-color: #0073bb; }
.check.on svg { display: block; width: 16px; height: 16px; }
.link { color: #0073bb; }
.ok { color: #1d8102; }
.muted { color: #687078; }
.status-ic { width: 21px; height: 21px; margin-right: 6px; flex: none; }
.zoom-ic { width: 20px; height: 21px; margin-left: 12px; color: #545b64; flex: none; }
.zoom-ic.first { margin-left: 14px; }
.zoom-ic.near { margin-left: 6px; }
.plus-ic { width: 20px; height: 22px; margin-left: 6px; color: #545b64; flex: none; }
.hscroll { height: 24px; background: #f1f1f1; border-bottom: 2px solid #879596; display: flex; align-items: center; flex: none; }
.hs-left { width: 0; height: 0; margin: 0 6px 0 7px; border-top: 6px solid transparent; border-bottom: 6px solid transparent; border-right: 6px solid #a3a3a3; flex: none; }
.hs-thumb { width: 605px; height: 22px; margin: -2px 0 0 4px; background: #c1c1c1; }
.hs-right { width: 0; height: 0; margin-left: auto; margin-right: 9px; border-top: 6px solid transparent; border-bottom: 6px solid transparent; border-left: 6px solid #505050; }
.gap-fill { flex: 1; background: #f2f3f3; }
.help-rail { flex: 1; background: #fff; padding: 12px 0 0 14px; }

.details { flex: 1; min-height: 0; display: flex; border-top: 2px solid #d5dbdb; width: 1571px; background: #fff; }
.details-main { flex: 1; min-width: 0; display: flex; flex-direction: column; background: #fff; overflow: hidden; }
.drag-handle { height: 10px; width: 17px; margin: 7px 0 0 776px; border-top: 3px solid #545b64; border-bottom: 3px solid #545b64; flex: none; }
.details-head { height: 55px; display: flex; align-items: center; padding: 0 0 17px 25px; flex: none; }
.details-title { margin: 0; font-size: 23.700px; line-height: 38px; font-weight: 700; white-space: nowrap; flex: 1; }
.dh-gear { width: 24px; height: 24px; color: #545b64; flex: none; }
.dh-sep { width: 1px; height: 32px; background: #eaeded; margin: 0 14px 0 11px; }
.dh-close { width: 18px; height: 18px; color: #545b64; margin-right: 36px; }
.details-clip { flex: 1; min-height: 0; overflow: hidden; }
.grid { display: grid; grid-template-columns: 519px 504px 1fr; margin-top: -12px; }
.col { padding-left: 10px; border-left: 1px solid #eaeded; font-size: 18.700px; }
.col:first-child { padding-left: 25px; border-left: 0; }
.kv-top { height: 50px; }
.kv-a { height: 146px; }
.kv-b { height: 143px; }
.key { color: #545b64; line-height: 30px; white-space: nowrap; font-size: 18.200px; }
.val { line-height: 30px; white-space: nowrap; }
.val.link { margin-top: 2px; }
.val.opt { margin-top: 0; }
.eks-val { font-size: 19px; }
.narrow { font-size: 18.300px; }
.copy { width: 20px; height: 20px; color: #545b64; vertical-align: -4px; display: inline-block; margin-left: 6px; }
.copy.inline { margin-left: 7px; margin-right: 9px; }
.ext { width: 20px; height: 20px; color: #0073bb; vertical-align: -4px; margin-left: 6px; }
.info-ic { width: 21px; height: 21px; vertical-align: -5px; color: #0073bb; margin-right: 2px; }
.learn { margin-top: 5px; }
.pipe { color: #16191f; }
.inner-scroll { width: 25px; background: #f1f1f1; margin-right: 3px; }
.inner-scroll .sb-thumb { width: 21px; height: 74px; margin-top: 97px; }
.page-scroll { width: 23px; margin-left: 0; }
.page-scroll .sb-thumb { height: 584px; }
.brain-bubble { position: absolute; right: -24px; top: 760px; width: 66px; height: 61px; background: #fff; border-radius: 24px 0 0 24px; display: flex; align-items: center; justify-content: center; z-index: 3; }

/* footer */
.awsfoot { height: 41px; background: #232f3e; border-top: 1px solid #545b64; color: #fff; display: flex; align-items: center; padding-left: 22px; font-size: 15.700px; flex: none; white-space: nowrap; overflow: hidden; }
.foot-shell { width: 21px; height: 21px; color: #fff; flex: none; }
.shell-label { margin-left: 7px; }
.feedback { margin-left: 34px; }
.copyright { margin-left: 951px; }
.privacy { margin-left: 40px; }
.terms { margin-left: 34px; }
.cookie { margin-left: 33px; }

/* taskbar */
.taskbar { height: 60px; background: linear-gradient(90deg, #2c3d3a 0, #1d2a28 10%, #1c2725 60%, #2b3331 75%, #1e2927 90%); display: flex; align-items: center; color: #fff; flex: none; }
.start { width: 72px; height: 60px; display: flex; align-items: center; justify-content: center; flex: none; }
.win-search { width: 431px; height: 60px; background: #f0f0f0; border: 2px solid #c4c4c4; border-width: 2px 2px 3px 2px; display: flex; align-items: center; position: relative; flex: none; }
.ws-glass { width: 24px; height: 24px; margin-left: 17px; flex: none; }
.ws-text { font-size: 21.500px; color: #1a1a1a; margin-left: 17px; white-space: nowrap; }
.ws-art { position: absolute; right: 8px; top: 0; width: 100px; height: 58px; }
.tk-slot { position: relative; width: 75px; height: 60px; display: flex; align-items: center; justify-content: center; flex: none; }
.tk-slot.run::after { content: ""; position: absolute; left: 7px; right: 7px; bottom: 0; height: 3px; background: #76b9ed; }
.tk-slot.active { background: #4a5552; box-shadow: inset 0 -3px #76b9ed; }
.ic-24 { width: 24px; height: 24px; }
.ic-36 { width: 36px; height: 36px; }
.ic-copilot { width: 36px; height: 34px; }
.ic-folder { width: 32px; height: 28px; }
.ic-notepad { width: 32px; height: 32px; }
.ic-cmd { width: 32px; height: 32px; }
.ic-paint { width: 35px; height: 34px; }
.tk-badge { position: absolute; left: 36px; top: 27px; width: 23px; height: 23px; }
.weather { display: flex; align-items: center; margin-left: 191px; flex: none; }
.wx { width: 36px; height: 34px; }
.wx-temp { font-size: 19.500px; margin-left: 12px; }
.tray { flex: none; }
.chevron { width: 20px; height: 10px; margin-left: 37px; }
.tray-meet { width: 34px; height: 58px; margin-left: 10px; background: #37433f; display: flex; align-items: center; justify-content: center; flex: none; }
.power { width: 25px; height: 16px; margin-left: 6px; }
.wifi { width: 20px; height: 18px; margin-left: 13px; }
.vol { width: 23px; height: 18px; margin-left: 11px; }
.tray-lang { font-size: 16.500px; margin-left: 17px; flex: none; }
.clock { display: flex; flex-direction: column; align-items: center; gap: 8px; font-size: 17.500px; line-height: 20px; margin-left: 21px; flex: none; }
.notify { width: 24px; height: 28px; margin-left: 35px; flex: none; }
.show-desktop { width: 1px; height: 60px; background: #6a7371; margin-left: 31px; flex: none; }
.cmd-text { font: 700 8px "Liberation Mono", monospace; fill: #ddd; }
```
